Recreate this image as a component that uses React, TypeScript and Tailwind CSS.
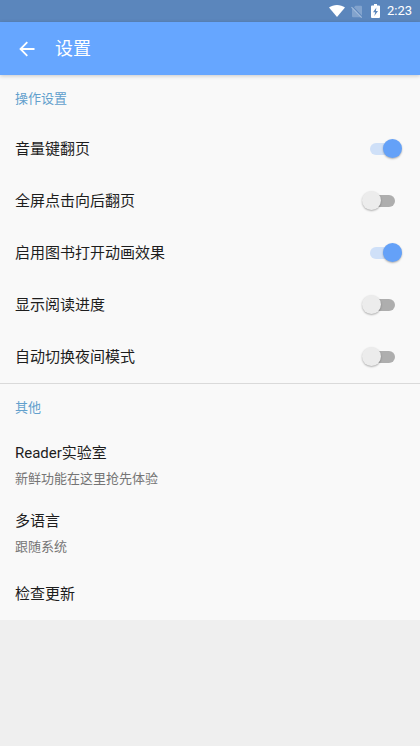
import { useState } from 'react'

interface ToggleItem {
  id: string
  label: string
  enabled: boolean
}

interface LinkItem {
  id: string
  label: string
  description?: string
}

const toggles: ToggleItem[] = [
  { id: 'volume-keys', label: '音量键翻页', enabled: true },
  { id: 'tap-next', label: '全屏点击向后翻页', enabled: false },
  { id: 'open-animation', label: '启用图书打开动画效果', enabled: true },
  { id: 'show-progress', label: '显示阅读进度', enabled: false },
  { id: 'auto-night', label: '自动切换夜间模式', enabled: false },
]

const links: LinkItem[] = [
  { id: 'lab', label: 'Reader实验室', description: '新鲜功能在这里抢先体验' },
  { id: 'language', label: '多语言', description: '跟随系统' },
  { id: 'update', label: '检查更新' },
]

function StatusBar() {
  return (
    <div className="flex h-[22px] items-center justify-end bg-[#5b86bc] pr-2 text-white">
      <svg viewBox="0 0 16 12" className="h-3 w-4" fill="currentColor" aria-hidden="true">
        <path d="M8 12 0 2.6C2.2.9 5 0 8 0s5.8.9 8 2.6z" />
      </svg>
      <svg viewBox="0 0 12 13" className="ml-1.5 h-[13px] w-3" aria-hidden="true">
        <path d="M4.5.8H10a1 1 0 0 1 1 1v9.4a1 1 0 0 1-1 1H2a1 1 0 0 1-1-1V4.300z" fill="#82a3cd" />
        <path d="m1.300 1.300 10 10.600" stroke="#5b86bc" strokeWidth="1.200" />
        <path d="m.5 2.200 10.200 10.400" stroke="#a3bcdc" strokeWidth="1.100" />
      </svg>
      <svg viewBox="0 0 9 14" className="ml-2 h-3.5 w-[9px]" aria-hidden="true">
        <path
          d="M3 0h3v1.500h2a1 1 0 0 1 1 1V13a1 1 0 0 1-1 1H1a1 1 0 0 1-1-1V2.500a1 1 0 0 1 1-1h2z"
          fill="currentColor"
        />
        <path d="M5.400 3.500 2 8.300h2.200l-.9 3.700 3.700-5H4.900z" fill="#5b86bc" />
      </svg>
      <span className="ml-[7px] text-[13px] leading-6">2:23</span>
    </div>
  )
}

function SectionTitle({ children }: { children: string }) {
  return <h2 className="px-[15px] text-[13px] leading-12 text-[#62a0cd]">{children}</h2>
}

function ToggleRow({ item }: { item: ToggleItem }) {
  const [checked, setChecked] = useState(item.enabled)

  return (
    <label htmlFor={item.id} className="flex h-[52px] items-center justify-between pr-[25px] pl-[15px]">
      <span>{item.label}</span>
      <input
        id={item.id}
        type="checkbox"
        role="switch"
        checked={checked}
        onChange={() => setChecked(!checked)}
        className="relative h-3 w-[25px] shrink-0 appearance-none rounded-full bg-[#aeaeae] before:absolute before:-top-1 before:-left-2 before:size-[19px] before:rounded-full before:bg-[#ececec] before:shadow-[0_1px_2px_rgba(0,0,0,0.3)] checked:bg-[#cfe0f8] checked:before:left-[13px] checked:before:bg-[#64a1f8]"
      />
    </label>
  )
}

function LinkRow({ item }: { item: LinkItem }) {
  return (
    <button
      type="button"
      className={`block w-full px-[15px] text-left leading-[26px] ${item.description ? 'py-2' : 'py-[13px]'}`}
    >
      <span className="block">{item.label}</span>
      {item.description && (
        <span className="block text-[13px] text-[#757575]">{item.description}</span>
      )}
    </button>
  )
}

export default function App() {
  return (
    <div className="min-h-screen bg-[#efefef] font-[Roboto,'Noto_Sans_CJK_SC',sans-serif] text-[15px] text-[#1d1d1d]">
      <StatusBar />
      <header className="relative flex h-[53px] items-center bg-[#66a6ff] px-[19px] text-white shadow-[0_1px_4px_rgba(0,0,0,0.2)]">
        <button type="button" aria-label="返回">
          <svg viewBox="0 0 16 16" className="size-4" fill="none" stroke="currentColor" strokeWidth="1.800" aria-hidden="true">
            <path d="M15.500 8H2M8.300 1.200 1.500 8l6.800 6.800" />
          </svg>
        </button>
        <h1 className="ml-5 text-[18px] leading-[26px]">设置</h1>
      </header>

      <main className="bg-[#f9f9f9]">
        <section className="border-b border-[#dadada]">
          <SectionTitle>操作设置</SectionTitle>
          {toggles.map((item) => (
            <ToggleRow key={item.id} item={item} />
          ))}
        </section>
        <section>
          <SectionTitle>其他</SectionTitle>
          {links.map((item) => (
            <LinkRow key={item.id} item={item} />
          ))}
        </section>
      </main>
    </div>
  )
}
